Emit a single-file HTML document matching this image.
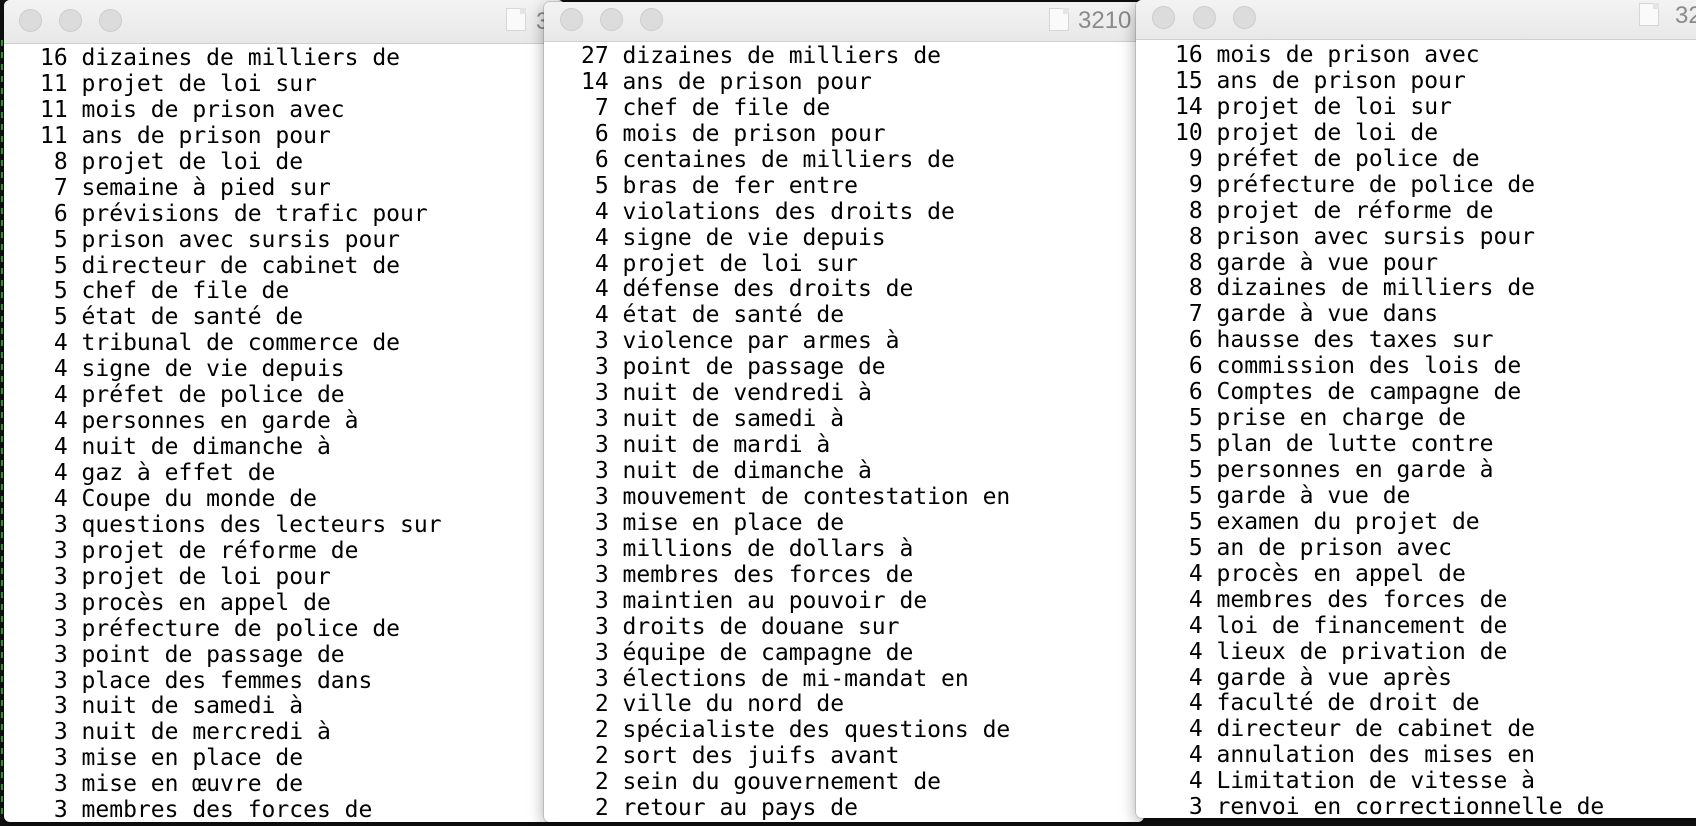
<!DOCTYPE html>
<html><head><meta charset="utf-8"><style>
html,body{margin:0;padding:0;width:1696px;height:826px;overflow:hidden;background:#111;}
.win{position:absolute;background:#fff;border-radius:6px;overflow:hidden;box-shadow:0 4px 16px rgba(0,0,0,.35),0 0 0 1px rgba(0,0,0,.12);}
.tb{position:absolute;left:0;right:0;top:0;background:linear-gradient(#f3f3f3,#e8e8e8);border-bottom:1px solid #cfcfcf;}
.c{position:absolute;width:23px;height:23px;border-radius:50%;background:#dcdcdc;border:1px solid #cdcdcd;box-sizing:border-box;}
.doc{position:absolute;width:20px;height:23px;background:#fafafa;border:1px solid #d6d6d6;box-sizing:border-box;}
.doc:after{content:"";position:absolute;right:-1px;top:-1px;width:6px;height:6px;background:#e4e4e4;}
.tt{position:absolute;font:24px "Liberation Sans",sans-serif;color:#8a8a8a;top:4px;}
pre{position:absolute;margin:0;font-family:"DejaVu Sans Mono","Liberation Mono",monospace;font-size:23px;line-height:25.93px;color:#000;}
</style></head><body>
<div style="position:absolute;left:0;top:0;width:4px;height:826px;background:#111"></div>
<div style="position:absolute;left:1px;top:40px;width:2px;height:780px;background:repeating-linear-gradient(#3a3 0 6px,#111 6px 12px)"></div>

<div class="win" style="left:4px;top:0;width:560px;height:822px;">
 <div class="tb" style="height:43px"></div>
 <div class="c" style="left:15px;top:9px"></div><div class="c" style="left:55px;top:9px"></div><div class="c" style="left:95px;top:9px"></div>
 <div class="doc" style="left:502px;top:8px"></div><div class="tt" style="left:532px;top:8px">3</div>
<pre style="left:36px;top:46px">16 dizaines de milliers de
11 projet de loi sur
11 mois de prison avec
11 ans de prison pour
 8 projet de loi de
 7 semaine à pied sur
 6 prévisions de trafic pour
 5 prison avec sursis pour
 5 directeur de cabinet de
 5 chef de file de
 5 état de santé de
 4 tribunal de commerce de
 4 signe de vie depuis
 4 préfet de police de
 4 personnes en garde à
 4 nuit de dimanche à
 4 gaz à effet de
 4 Coupe du monde de
 3 questions des lecteurs sur
 3 projet de réforme de
 3 projet de loi pour
 3 procès en appel de
 3 préfecture de police de
 3 point de passage de
 3 place des femmes dans
 3 nuit de samedi à
 3 nuit de mercredi à
 3 mise en place de
 3 mise en œuvre de
 3 membres des forces de</pre>
</div>

<div class="win" style="left:544px;top:2px;width:600px;height:820px;">
 <div class="tb" style="height:39px"></div>
 <div class="c" style="left:16px;top:6px"></div><div class="c" style="left:56px;top:6px"></div><div class="c" style="left:96px;top:6px"></div>
 <div class="doc" style="left:505px;top:6px"></div><div class="tt" style="left:534px;top:5px">3210</div>
<pre style="left:37px;top:42px">27 dizaines de milliers de
14 ans de prison pour
 7 chef de file de
 6 mois de prison pour
 6 centaines de milliers de
 5 bras de fer entre
 4 violations des droits de
 4 signe de vie depuis
 4 projet de loi sur
 4 défense des droits de
 4 état de santé de
 3 violence par armes à
 3 point de passage de
 3 nuit de vendredi à
 3 nuit de samedi à
 3 nuit de mardi à
 3 nuit de dimanche à
 3 mouvement de contestation en
 3 mise en place de
 3 millions de dollars à
 3 membres des forces de
 3 maintien au pouvoir de
 3 droits de douane sur
 3 équipe de campagne de
 3 élections de mi-mandat en
 2 ville du nord de
 2 spécialiste des questions de
 2 sort des juifs avant
 2 sein du gouvernement de
 2 retour au pays de</pre>
</div>

<div class="win" style="left:1136px;top:0;width:580px;height:818px;border-radius:6px 0 0 6px;">
 <div class="tb" style="height:39px"></div>
 <div class="c" style="left:16px;top:6px"></div><div class="c" style="left:57px;top:6px"></div><div class="c" style="left:97px;top:6px"></div>
 <div class="doc" style="left:503px;top:3px"></div><div class="tt" style="left:539px;top:2px">32</div>
<pre style="left:39px;top:43px">16 mois de prison avec
15 ans de prison pour
14 projet de loi sur
10 projet de loi de
 9 préfet de police de
 9 préfecture de police de
 8 projet de réforme de
 8 prison avec sursis pour
 8 garde à vue pour
 8 dizaines de milliers de
 7 garde à vue dans
 6 hausse des taxes sur
 6 commission des lois de
 6 Comptes de campagne de
 5 prise en charge de
 5 plan de lutte contre
 5 personnes en garde à
 5 garde à vue de
 5 examen du projet de
 5 an de prison avec
 4 procès en appel de
 4 membres des forces de
 4 loi de financement de
 4 lieux de privation de
 4 garde à vue après
 4 faculté de droit de
 4 directeur de cabinet de
 4 annulation des mises en
 4 Limitation de vitesse à
 3 renvoi en correctionnelle de</pre>
</div>
</body></html>
